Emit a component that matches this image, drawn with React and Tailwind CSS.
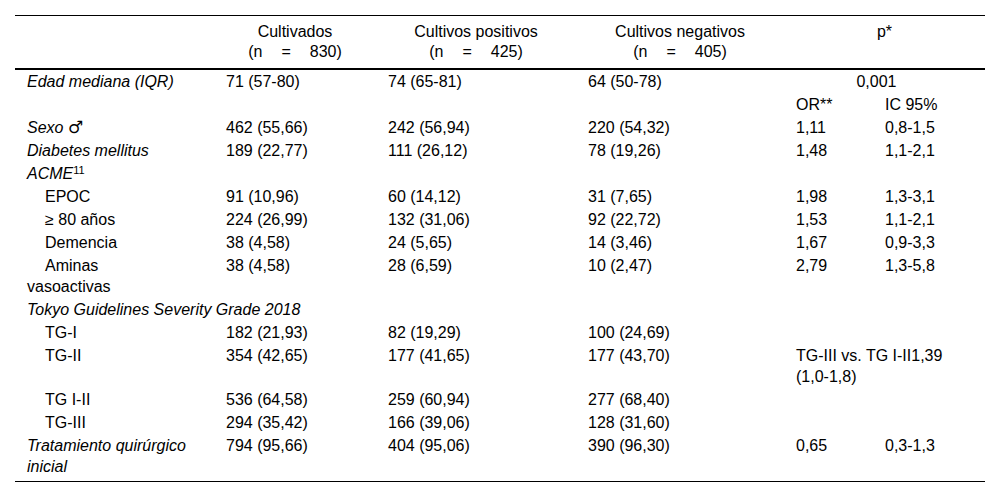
import React from 'react';

// column widths (px) of the table
const cols = [199, 162, 200, 208, 89, 112];

const cell = 'py-px align-top leading-[21px]';
const td = `pl-3 pr-1 text-left ${cell}`;

function N({ value }) {
  // "(n = 830)" is spread out in the source table
  return (
    <span className="inline-flex gap-[19px]">
      <span>(n</span>
      <span>=</span>
      <span>{value})</span>
    </span>
  );
}

function Head({ title, n }) {
  return (
    <th className="border-b-2 border-black px-2 py-[6px] text-center font-normal leading-[20px] align-top">
      <div>{title}</div>
      {n && <div><N value={n} /></div>}
    </th>
  );
}

function Row({ label, sub, values, or, ic }) {
  return (
    <tr>
      <td className={sub ? `${td} indent-[18px]` : `${td} italic`}>{label}</td>
      {values.map((v, i) => (
        <td key={i} className={td}>{v}</td>
      ))}
      <td className={td}>{or}</td>
      <td className={td}>{ic}</td>
    </tr>
  );
}

export default function App() {
  return (
    <div className="w-[1000px] h-[499px] overflow-hidden bg-white pt-[15px] pl-[15px] text-[16px] text-black font-['Liberation_Sans',Arial,sans-serif]">
      <div className="w-[970px] border-t border-b border-black pb-[3px]">
        <table className="w-[970px] table-fixed border-separate border-spacing-0">
          <colgroup>
            {cols.map((w, i) => (
              <col key={i} style={{ width: w }} />
            ))}
          </colgroup>
          <thead>
            <tr>
              <th className="border-b-2 border-black" />
              <Head title="Cultivados" n="830" />
              <Head title="Cultivos positivos" n="425" />
              <Head title="Cultivos negativos" n="405" />
              <th colSpan={2} className="border-b-2 border-black px-2 py-[6px] text-center font-normal leading-[20px] align-top">
                p*
              </th>
            </tr>
          </thead>
          <tbody>
            <tr>
              <td className={`${td} italic`}>Edad mediana (IQR)</td>
              <td className={td}>71 (57-80)</td>
              <td className={td}>74 (65-81)</td>
              <td className={td}>64 (50-78)</td>
              <td colSpan={2} className={`pl-0 pr-4 text-center ${cell}`}>0,001</td>
            </tr>
            <tr>
              <td className={td} />
              <td className={td} />
              <td className={td} />
              <td className={td} />
              <td className={td}>OR**</td>
              <td className={td}>IC 95%</td>
            </tr>
            <Row
              label={<>Sexo <span className="font-['DejaVu_Sans',sans-serif] text-[17px] leading-none">♂</span></>}
              values={['462 (55,66)', '242 (56,94)', '220 (54,32)']}
              or="1,11"
              ic="0,8-1,5"
            />
            <Row label="Diabetes mellitus" values={['189 (22,77)', '111 (26,12)', '78 (19,26)']} or="1,48" ic="1,1-2,1" />
            <tr>
              <td className={`${td} italic`}>ACME<sup className="not-italic text-[11px]">11</sup></td>
              <td className={td} />
              <td className={td} />
              <td className={td} />
              <td className={td} />
              <td className={td} />
            </tr>
            <Row sub label="EPOC" values={['91 (10,96)', '60 (14,12)', '31 (7,65)']} or="1,98" ic="1,3-3,1" />
            <Row sub label="≥ 80 años" values={['224 (26,99)', '132 (31,06)', '92 (22,72)']} or="1,53" ic="1,1-2,1" />
            <Row sub label="Demencia" values={['38 (4,58)', '24 (5,65)', '14 (3,46)']} or="1,67" ic="0,9-3,3" />
            <Row sub label={<>Aminas<br />vasoactivas</>} values={['38 (4,58)', '28 (6,59)', '10 (2,47)']} or="2,79" ic="1,3-5,8" />
            <tr>
              <td colSpan={6} className={`${td} italic`}>Tokyo Guidelines Severity Grade 2018</td>
            </tr>
            <Row sub label="TG-I" values={['182 (21,93)', '82 (19,29)', '100 (24,69)']} or="" ic="" />
            <tr>
              <td className={`${td} indent-[18px]`}>TG-II</td>
              <td className={td}>354 (42,65)</td>
              <td className={td}>177 (41,65)</td>
              <td className={td}>177 (43,70)</td>
              <td colSpan={2} className={`pl-3 pr-8 text-left ${cell}`}>TG-III vs. TG I-II1,39 (1,0-1,8)</td>
            </tr>
            <Row sub label="TG I-II" values={['536 (64,58)', '259 (60,94)', '277 (68,40)']} or="" ic="" />
            <Row sub label="TG-III" values={['294 (35,42)', '166 (39,06)', '128 (31,60)']} or="" ic="" />
            <Row label="Tratamiento quirúrgico inicial" values={['794 (95,66)', '404 (95,06)', '390 (96,30)']} or="0,65" ic="0,3-1,3" />
          </tbody>
        </table>
      </div>
    </div>
  );
}
